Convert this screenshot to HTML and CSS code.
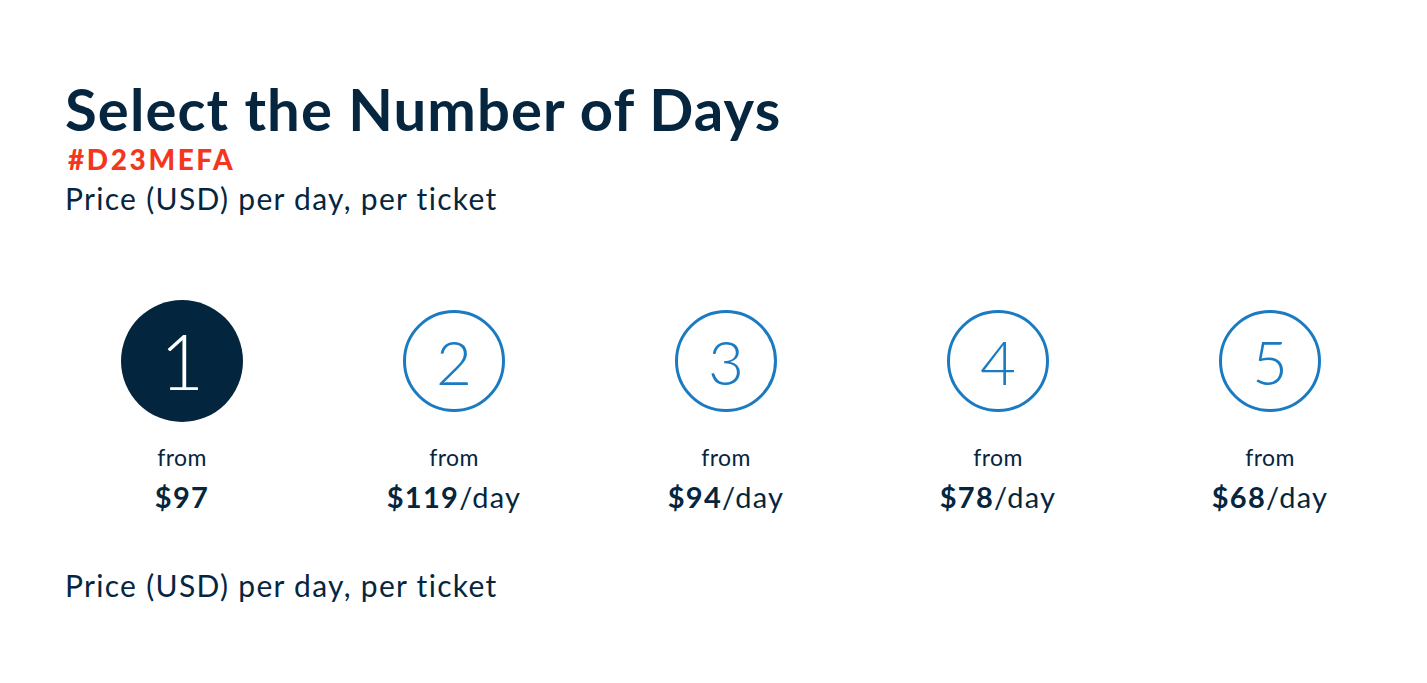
FILE: index.html
```html
<!DOCTYPE html>
<html>
<head>
<meta charset="utf-8">
<link rel="stylesheet" href="styles.css">
</head>
<body>
<main class="page">
  <header class="intro">
    <h1 class="title">Select the Number of Days</h1>
    <div class="code">#D23MEFA</div>
    <p class="note">Price (USD) per day, per ticket</p>
  </header>
  <section class="days">
    <div class="day">
      <div class="circle selected"><span class="num big">1</span></div>
      <div class="from">from</div>
      <div class="price"><b>$97</b></div>
    </div>
    <div class="day">
      <div class="circle"><span class="num">2</span></div>
      <div class="from">from</div>
      <div class="price"><b>$119</b>/day</div>
    </div>
    <div class="day">
      <div class="circle"><span class="num">3</span></div>
      <div class="from">from</div>
      <div class="price"><b>$94</b>/day</div>
    </div>
    <div class="day">
      <div class="circle"><span class="num">4</span></div>
      <div class="from">from</div>
      <div class="price"><b>$78</b>/day</div>
    </div>
    <div class="day">
      <div class="circle"><span class="num">5</span></div>
      <div class="from">from</div>
      <div class="price"><b>$68</b>/day</div>
    </div>
  </section>
  <p class="note bottom">Price (USD) per day, per ticket</p>
</main>
</body>
</html>
```

FILE: styles.css
```css
* { box-sizing: border-box; }
html, body { margin: 0; padding: 0; background: #fff; }
body {
  font-family: Lato, "Noto Sans", sans-serif;
  color: #062640;
}
.page {
  padding: 76px 0 0 65px;
}
.intro { display: flex; flex-direction: column; }
.title {
  margin: 0;
  font-size: 58px;
  font-weight: 700;
  line-height: 66px;
  letter-spacing: 1.1px;
}
.code {
  margin: 0 0 0 3px;
  font-size: 28px;
  font-weight: 900;
  line-height: 34px;
  letter-spacing: 2.6px;
  color: #f5361f;
}
.note {
  margin: 4px 0 0;
  font-size: 30px;
  font-weight: 400;
  line-height: 36px;
  letter-spacing: 1.3px;
}
.days {
  display: grid;
  grid-template-columns: repeat(5, 272px);
  margin: 84px 0 0 -19px;
}
.day {
  display: flex;
  flex-direction: column;
  align-items: center;
}
.circle {
  width: 102px;
  height: 102px;
  margin: 10px 0;
  border: 3px solid #1b7bc2;
  border-radius: 50%;
  display: flex;
  align-items: center;
  justify-content: center;
  color: #1b7bc2;
}
.circle.selected {
  width: 122px;
  height: 122px;
  margin: 0;
  border: none;
  background: #03253d;
  color: #fff;
}
.num {
  font-size: 62px;
  font-weight: 300;
  line-height: 1;
}
.num.big { font-size: 76px; }
.from {
  margin-top: 20px;
  font-size: 23px;
  line-height: 30px;
  letter-spacing: 0.4px;
}
.price {
  margin-top: 7px;
  font-size: 29px;
  line-height: 36px;
  letter-spacing: 1.3px;
}
.price b { font-weight: 700; }
.note.bottom { margin-top: 52px; }
```
